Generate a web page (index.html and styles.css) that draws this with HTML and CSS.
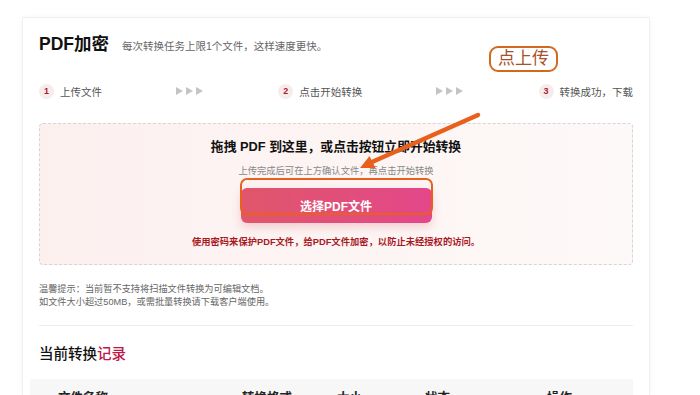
FILE: index.html
```html
<!DOCTYPE html>
<html lang="zh-CN">
<head>
  <meta charset="UTF-8">
  <meta name="viewport" content="width=device-width, initial-scale=1.0">
  <title>PDF加密</title>
  <link rel="stylesheet" href="styles.css">
</head>
<body>
  <div class="card">
    <div class="title-row">
      <h1>PDF加密</h1>
      <span class="subtitle">每次转换任务上限1个文件，这样速度更快。</span>
    </div>

    <div class="steps">
      <div class="step"><span class="step-num">1</span><span>上传文件</span></div>
      <svg class="step-arrows" width="28" height="8" viewBox="0 0 28 8">
        <path d="M0 0 L7 4 L0 8 Z M10 0 L17 4 L10 8 Z M20 0 L27 4 L20 8 Z" fill="#c4c4c4"/>
      </svg>
      <div class="step"><span class="step-num">2</span><span>点击开始转换</span></div>
      <svg class="step-arrows" width="28" height="8" viewBox="0 0 28 8">
        <path d="M0 0 L7 4 L0 8 Z M10 0 L17 4 L10 8 Z M20 0 L27 4 L20 8 Z" fill="#c4c4c4"/>
      </svg>
      <div class="step"><span class="step-num">3</span><span>转换成功，下载</span></div>
    </div>

    <div class="dropzone">
      <div class="drop-title">拖拽 PDF 到这里，或点击按钮立即开始转换</div>
      <div class="drop-sub">上传完成后可在上方确认文件，再点击开始转换</div>
      <button class="pick-btn">选择PDF文件</button>
      <div class="drop-note">使用密码来保护PDF文件，给PDF文件加密，以防止未经授权的访问。</div>
    </div>

    <div class="tips">
      <p>温馨提示：当前暂不支持将扫描文件转换为可编辑文档。</p>
      <p>如文件大小超过50MB，或需批量转换请下载客户端使用。</p>
    </div>

    <h2 class="records-title">当前转换<span class="accent">记录</span></h2>

    <div class="table-head">
      <span>文件名称</span>
      <span>转换格式</span>
      <span>大小</span>
      <span>状态</span>
      <span>操作</span>
    </div>

    <!-- annotations drawn over the page -->
    <div class="note-tag">点上传</div>
    <div class="note-box"></div>
    <svg class="note-arrow" width="626" height="376" viewBox="0 0 626 376">
      <line x1="349" y1="144" x2="455" y2="97" stroke="#e8601c" stroke-width="4.5" stroke-linecap="round"/>
      <polygon points="337,150 352.5,150 346.5,138" fill="#e8601c"/>
    </svg>
  </div>
</body>
</html>
```

FILE: styles.css
```css
body {
  margin: 0;
  height: 395px;
  background-color: #ffffff;
  font-family: "Liberation Sans", "Noto Sans CJK SC", sans-serif;
  color: #222;
  overflow: hidden;
}
.card {
  position: relative;
  box-sizing: border-box;
  width: 628px;
  height: 378px;
  margin: 17px 0 0 22px;
  padding: 14px 16px 0;
  border: 1px solid #f0f0f0;
  border-bottom: none;
  box-shadow: 0 0 6px rgba(0, 0, 0, 0.04);
  overflow: hidden;
}
.title-row {
  display: flex;
  align-items: baseline;
  gap: 13px;
  height: 24px;
}
h1 {
  margin: 0;
  font-size: 17.5px;
  line-height: 24px;
  font-weight: 700;
  color: #111;
}
.subtitle {
  font-size: 10.5px;
  color: #666;
}
.steps {
  display: flex;
  justify-content: space-between;
  align-items: center;
  height: 20px;
  margin-top: 25px;
  font-size: 10.5px;
  color: #555;
}
.step {
  display: flex;
  align-items: center;
  gap: 6px;
}
.step-num {
  display: flex;
  justify-content: center;
  align-items: center;
  width: 15px;
  height: 15px;
  border-radius: 50%;
  background-color: #f6ecec;
  color: #b0182c;
  font-size: 9px;
  font-weight: 700;
}
.dropzone {
  margin-top: 22px;
  height: 142px;
  box-sizing: border-box;
  padding-top: 14px;
  border: 1px dashed #d9d4d4;
  border-radius: 4px;
  background: linear-gradient(90deg, #fcf0ef, #fdf9f8);
  display: flex;
  flex-direction: column;
  align-items: center;
}
.drop-title {
  font-size: 12.8px;
  line-height: 18px;
  font-weight: 700;
  color: #111;
}
.drop-sub {
  margin-top: 8px;
  font-size: 9.3px;
  line-height: 14px;
  color: #888;
}
.pick-btn {
  margin-top: 10px;
  width: 191px;
  height: 35px;
  border: none;
  border-radius: 6px;
  background: linear-gradient(90deg, #e0566a, #e3478a);
  box-shadow: 0 4px 10px rgba(220, 80, 100, 0.25);
  color: white;
  font-family: inherit;
  font-size: 12px;
  font-weight: 700;
  cursor: pointer;
}
.drop-note {
  margin-top: 12px;
  font-size: 9.3px;
  line-height: 14px;
  font-weight: 700;
  color: #a8191f;
}
.tips {
  margin-top: 18px;
  font-size: 9.2px;
  line-height: 13px;
  color: #666;
}
.tips p {
  margin: 0;
}
.records-title {
  margin: 0;
  margin-top: 16px;
  padding-top: 18px;
  border-top: 1px solid #ececec;
  font-size: 14.5px;
  line-height: 20px;
  font-weight: 500;
  color: #111;
}
.accent {
  color: #c0174a;
}
.table-head {
  display: grid;
  grid-template-columns: 184px 95px 88px 122px 1fr;
  margin: 15px 0 0 -9px;
  padding: 10px 0 8px 28px;
  background-color: #f7f7f7;
  font-size: 12.5px;
  line-height: 18px;
  font-weight: 600;
  color: #222;
}
.note-tag {
  position: absolute;
  left: 466px;
  top: 28px;
  box-sizing: border-box;
  width: 69px;
  height: 26px;
  border: 2px solid #d2691e;
  border-radius: 9px;
  font-size: 17px;
  line-height: 22px;
  text-align: center;
  color: #a8502a;
}
.note-box {
  position: absolute;
  left: 217px;
  top: 160px;
  box-sizing: border-box;
  width: 193px;
  height: 37px;
  border: 2.5px solid #e8601c;
  border-radius: 7px;
}
.note-arrow {
  position: absolute;
  left: 0;
  top: 0;
  pointer-events: none;
}
```
